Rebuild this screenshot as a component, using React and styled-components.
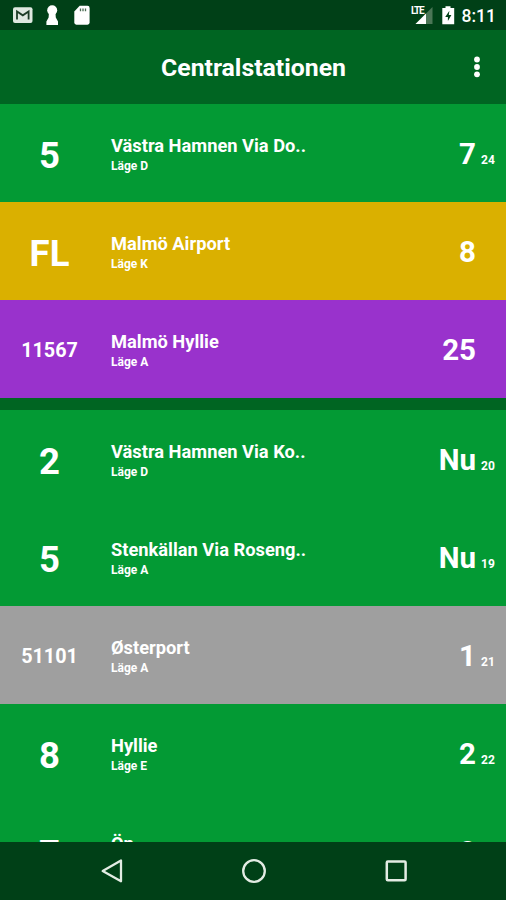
import React from "react";
import styled, { createGlobalStyle } from "styled-components";

const GlobalStyle = createGlobalStyle`
*{
    margin: 0;
    padding: 0;
    box-sizing: border-box;
}

body{
    font-family: Roboto, "Liberation Sans", sans-serif;
    font-weight: 700;
    color: #fff;
    background-color: #004017;
    overflow: hidden;
}
`

const Screen = styled.div`
    width: 506px;
    height: 900px;
    display: flex;
    flex-direction: column;
    overflow: hidden;
    white-space: nowrap;
`

const StatusBar = styled.div`
    height: 30px;
    flex: none;
    display: flex;
    justify-content: space-between;
    background-color: #004017;
    svg{
        display: block;
    }
`

const Clock = styled.span`
    font-size: 17.5px;
    font-weight: 500;
    line-height: 32px;
    padding-right: 10px;
`

const StatusSide = styled.div`
    display: flex;
`

const Header = styled.header`
    height: 74px;
    flex: none;
    display: grid;
    grid-template-columns: 58px 1fr 58px;
    align-items: center;
    background-color: #006522;
`

const Title = styled.h1`
    grid-column: 2;
    font-size: 24.8px;
    font-weight: 700;
    text-align: center;
    line-height: 30px;
    padding: 2px 0 0 1px;
`

const MenuButton = styled.button`
    border: none;
    background: none;
    height: 30px;
    svg{
        display: block;
        margin: 0 auto;
    }
`

const List = styled.main`
    flex: 1;
    min-height: 0;
    overflow: hidden;
    background-color: #006522;
`

const Group = styled.section`
    margin-bottom: 11.6px;
`

const Row = styled.div`
    height: 98px;
    display: grid;
    grid-template-columns: 99px 1fr 100px 30px;
    background-color: ${props => props.$color};
`

const Line = styled.div`
    text-align: center;
    font-size: ${props => props.$small ? "19.8px" : "36.5px"};
    line-height: ${props => props.$small ? "102px" : "103px"};
`

const Stop = styled.div`
    padding: 31px 0 0 12px;
`

const Destination = styled.p`
    font-size: 18.3px;
    line-height: 22px;
`

const Platform = styled.p`
    font-size: 12px;
    line-height: 14px;
    padding-top: 2px;
`

const Minutes = styled.div`
    text-align: right;
    font-size: 29.5px;
    line-height: 101px;
`

const Next = styled.div`
    font-size: 12px;
    line-height: 113px;
    padding-left: 5px;
`

const NavBar = styled.nav`
    height: 58px;
    flex: none;
    display: flex;
    justify-content: center;
    gap: 112px;
    align-items: center;
    padding-left: 1px;
    background-color: #004017;
    svg{
        display: block;
    }
`

const green = "#039a34";

const upcoming = [
    { line: "5", name: "Västra Hamnen Via Do..", stop: "Läge D", min: "7", next: "24", color: green },
    { line: "FL", name: "Malmö Airport", stop: "Läge K", min: "8", color: "#dab000" },
    { line: "11567", name: "Malmö Hyllie", stop: "Läge A", min: "25", color: "#9932cc" },
];

const departures = [
    { line: "2", name: "Västra Hamnen Via Ko..", stop: "Läge D", min: "Nu", next: "20", color: green },
    { line: "5", name: "Stenkällan Via Roseng..", stop: "Läge A", min: "Nu", next: "19", color: green },
    { line: "51101", name: "Østerport", stop: "Läge A", min: "1", next: "21", color: "#9f9f9f" },
    { line: "8", name: "Hyllie", stop: "Läge E", min: "2", next: "22", color: green },
    { line: "7", name: "Ön", min: "8", color: green },
];

const Departure = ({ item }) => (
    <Row $color={item.color}>
        <Line $small={item.line.length > 2}>{item.line}</Line>
        <Stop>
            <Destination>{item.name}</Destination>
            {item.stop && <Platform>{item.stop}</Platform>}
        </Stop>
        <Minutes>{item.min}</Minutes>
        <Next>{item.next}</Next>
    </Row>
)

const NotificationIcons = () => (
    <svg width="100" height="30" viewBox="0 0 100 30">
        <rect x="13" y="7.3" width="19.5" height="15.8" rx="2" fill="#dfe8e0" />
        <path d="M17 19.5V11.5L22.8 15.3L28.6 11.5V19.5" fill="none" stroke="#1d3c26" strokeWidth="1.8" />
        <circle cx="52.2" cy="10.2" r="5" fill="#fff" />
        <path d="M49 12H55.4L55.8 17.5L58 21.5V25H46.4V21.5L48.6 17.5Z" fill="#fff" />
        <path d="M79.7 5.8H87.5Q89.6 5.8 89.6 7.9V22.6Q89.6 24.7 87.5 24.7H76.4Q74.3 24.7 74.3 22.6V11.6Z" fill="#fff" />
        <path d="M80.5 8.5V11.3M83 8.5V11.3M85.5 8.5V11.3" stroke="#496b51" strokeWidth="1.3" />
    </svg>
)

const Lte = styled.span`
    font-size: 10px;
    line-height: 10px;
    letter-spacing: -1.2px;
    padding-top: 6px;
    margin-right: -10px;
    z-index: 1;
`

const SignalIcons = () => (
    <svg width="48" height="30" viewBox="0 0 48 30">
        <path d="M18.5 7V24H1.5Z" fill="#4b7656" />
        <path d="M12 13.5V24H1.5Z" fill="#fff" />
        <path d="M31.5 6.2H36.5V8H40.2V24.3H28.3V8H31.5Z" fill="#fff" />
        <path d="M35.4 10.8L31.2 17H33.9V21L37.4 15H34.8Z" fill="#004017" />
    </svg>
)

const App = () => {
    return (
        <>
            <GlobalStyle />
            <Screen>
                <StatusBar>
                    <NotificationIcons />
                    <StatusSide>
                        <Lte>LTE</Lte>
                        <SignalIcons />
                        <Clock>8:11</Clock>
                    </StatusSide>
                </StatusBar>
                <Header>
                    <Title>Centralstationen</Title>
                    <MenuButton aria-label="Meny">
                        <svg width="8" height="24" viewBox="0 0 8 24" fill="#fff">
                            <circle cx="4" cy="4.5" r="2.9" />
                            <circle cx="4" cy="12" r="2.9" />
                            <circle cx="4" cy="19.3" r="2.9" />
                        </svg>
                    </MenuButton>
                </Header>
                <List>
                    <Group>
                        {upcoming.map((item, i) => <Departure key={i} item={item} />)}
                    </Group>
                    <Group>
                        {departures.map((item, i) => <Departure key={i} item={item} />)}
                    </Group>
                </List>
                <NavBar>
                    <svg width="30" height="30" viewBox="0 0 30 30" fill="none" stroke="#e3ece4" strokeWidth="2.3">
                        <path d="M24 4.5V25.3L5.7 15Z" strokeLinejoin="round" />
                    </svg>
                    <svg width="30" height="30" viewBox="0 0 30 30" fill="none" stroke="#e3ece4" strokeWidth="2.3">
                        <circle cx="15" cy="15" r="10.8" />
                    </svg>
                    <svg width="30" height="30" viewBox="0 0 30 30" fill="none" stroke="#e3ece4" strokeWidth="2.5">
                        <rect x="5.8" y="5.5" width="18.8" height="18.8" rx="1" />
                    </svg>
                </NavBar>
            </Screen>
        </>
    )
}

export default App;
